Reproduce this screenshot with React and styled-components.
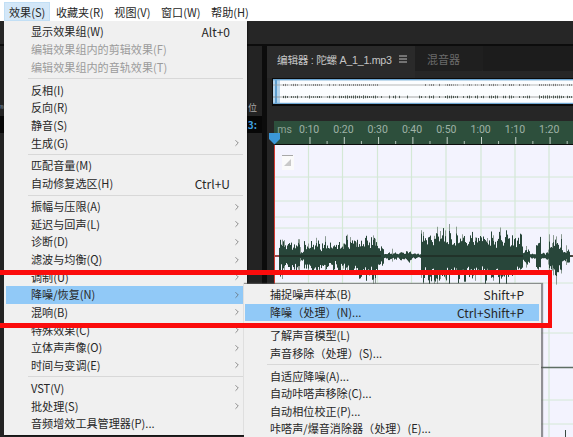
import React from "react";
import styled, { createGlobalStyle } from "styled-components";
import { ChevronRight } from "lucide-react";

const Global = createGlobalStyle`
  html, body { margin: 0; padding: 0; background: #262626; }
  body { font-family: "Noto Sans CJK SC", "Noto Sans", sans-serif; }
  * { box-sizing: border-box; }
`;

const Page = styled.div`
  position: relative;
  width: 573px;
  height: 437px;
  overflow: hidden;
  display: flex;
  flex-direction: column;
  background: #262626;
`;

const MenuBar = styled.nav`
  height: 21px;
  flex: none;
  display: flex;
  padding: 2px 0 0 4px;
  background: #ffffff;
`;

const BarItem = styled.div`
  display: flex;
  align-items: center;
  height: 19px;
  padding: 0 5px;
  margin-right: 0.6px;
  font-size: 11.1px;
  color: #262626;
  background: ${(p) => (p.$open ? "#d3e7f8" : "transparent")};
  box-shadow: ${(p) => (p.$open ? "inset 0 0 0 1px #c2dff5" : "none")};
`;

const Toolbar = styled.div`
  height: 25px;
  flex: none;
  background: #262626;
  border-bottom: 2px solid #0c0c0c;
`;

const Workspace = styled.div`
  flex: 1;
  min-height: 0;
  display: flex;
  background: #0c0c0c;
`;

const SidePanel = styled.aside`
  width: 262px;
  flex: none;
  padding-top: 52px;
  margin-right: 5px;
  background: #232323;
`;

const SideHeader = styled.div`
  height: 18px;
  display: flex;
  justify-content: space-between;
  align-items: center;
  padding-right: 5px;
  font-size: 9px;
  color: #a8a8a8;
`;

const TinyLabel = styled.span`
  font-size: 4px;
  color: #7f97a8;
`;

const SideValue = styled.div`
  height: 17px;
  display: flex;
  justify-content: flex-end;
  align-items: center;
  padding-right: 5px;
  background: #070707;
  color: #3f9fdf;
  font-size: 10px;
  font-weight: 700;
`;

const Editor = styled.section`
  flex: 1;
  min-width: 0;
  display: flex;
  flex-direction: column;
  background: #262626;
`;

const Tabs = styled.div`
  height: 32px;
  flex: none;
  display: flex;
  align-items: flex-start;
`;

const ActiveTab = styled.div`
  width: 148px;
  height: 32px;
  display: flex;
  align-items: center;
  padding: 0 0 6px 10px;
  background: #2a2a2a;
  color: #c6c6c6;
  font-family: "Liberation Sans", "Noto Sans CJK SC", sans-serif;
  font-size: 10.7px;
  letter-spacing: -0.3px;
  white-space: nowrap;
`;

const TabName = styled.span`
  flex: none;
  width: 122px;
`;

const TabMenu = styled.svg`
  flex: none;
  width: 8px;
  height: 8px;
`;

const InactiveTab = styled.div`
  width: 68px;
  height: 25px;
  display: flex;
  align-items: center;
  padding-left: 12px;
  background: #1f1f1f;
  border-bottom-right-radius: 2px;
  color: #6b6b6b;
  font-size: 11px;
`;

const EmptyTabs = styled.div`
  flex: 1;
  height: 25px;
  background: #1c1c1c;
`;

const Overview = styled.div`
  height: 28px;
  flex: none;
  margin-left: 5px;
  padding: 1px 0 2px 1px;
  background: #0a0a0a;
`;

const OverviewSvg = styled.svg`
  display: block;
  width: 100%;
  height: 100%;
`;

const RulerGap = styled.div`
  height: 15px;
  flex: none;
`;

const Ruler = styled.div`
  height: 24px;
  flex: none;
  margin-left: 7px;
  display: flex;
  flex-direction: column;
  background: #2d4f3c;
  border-bottom: 1px solid #0c0c0c;
`;

const RulerLabels = styled.div`
  height: 16px;
  display: flex;
  align-items: flex-end;
`;

const Unit = styled.div`
  width: 18px;
  flex: none;
  text-align: right;
  font-family: Roboto, sans-serif;
  font-size: 10.5px;
  line-height: 14px;
  color: #8fa497;
  white-space: nowrap;
`;

const RulerLabel = styled.div`
  width: 34.3px;
  flex: none;
  text-align: center;
  font-family: Roboto, sans-serif;
  font-size: 10.5px;
  line-height: 14px;
  color: #9fb2a6;
`;

const RulerTicks = styled.div`
  flex: 1;
  margin-left: 34.5px;
  background-repeat: repeat-x;
  background-image: linear-gradient(to right, #c8d4cc 1px, transparent 1px),
    linear-gradient(to right, #b7c6bc 1px, transparent 1px);
  background-size: 34.3px 7px, 34.3px 3px;
  background-position: 0.5px 0, 17.6px 4px;
`;

const PlotArea = styled.div`
  flex: 1;
  min-height: 0;
  margin-left: 7px;
  background: #f3f3fe;
  border-left: 1px solid #d23a32;
`;

const PlotSvg = styled.svg`
  display: block;
  width: 298px;
  height: 292px;
`;

const Playhead = styled.svg`
  position: absolute;
  left: 269px;
  top: 133px;
  width: 12px;
  height: 12px;
`;

const Menu = styled.div`
  position: absolute;
  left: 4px;
  top: 21px;
  width: 243px;
  height: 414px;
  padding: 2px 4px 0 2px;
  background: #f0f0f0;
  box-shadow: 1px 1px 1px rgba(0, 0, 0, 0.35);
`;

const SubMenu = styled.div`
  position: absolute;
  left: 244px;
  top: 284px;
  width: 297px;
  height: 170px;
  padding: 2px 2px 0 1px;
  background: #f0f0f0;
  box-shadow: 1px 0 1px 1px rgba(90, 90, 90, 0.65);
`;

const Row = styled.div`
  height: 17.65px;
  display: grid;
  grid-template-columns: 1fr auto ${(p) => p.$trail}px;
  align-items: center;
  padding-left: 25px;
  font-size: 11.1px;
  line-height: 17px;
  white-space: pre;
  color: ${(p) => (p.$off ? "#9b9b9b" : "#262626")};
  background: ${(p) => (p.$on ? "#91c9f7" : "transparent")};
`;

const Shortcut = styled.span`
  font-size: 12px;
`;

const Arrow = styled(ChevronRight)`
  justify-self: end;
  margin-right: 1px;
  color: #5a5a5a;
`;

const Separator = styled.div`
  height: 5.35px;
  display: flex;
  align-items: center;
  margin-left: 22px;
  &::after {
    content: "";
    flex: 1;
    height: 1px;
    background: #d8d8d8;
  }
`;

const RedFrame = styled.div`
  position: absolute;
  left: -10px;
  top: 270px;
  width: 562px;
  height: 58px;
  border: solid #fb0c0c;
  border-width: 5.5px 4.5px 5.5px 0;
`;

const mainItems = [
  { t: "显示效果组(W)", k: "Alt+0" },
  { t: "编辑效果组内的剪辑效果(F)", off: 1 },
  { t: "编辑效果组内的音轨效果(T)", off: 1 },
  "-",
  { t: "反相(I)" },
  { t: "反向(R)" },
  { t: "静音(S)" },
  { t: "生成(G)", sub: 1 },
  "-",
  { t: "匹配音量(M)" },
  { t: "自动修复选区(H)", k: "Ctrl+U" },
  "-",
  { t: "振幅与压限(A)", sub: 1 },
  { t: "延迟与回声(L)", sub: 1 },
  { t: "诊断(D)", sub: 1 },
  { t: "滤波与均衡(Q)", sub: 1 },
  { t: "调制(U)", sub: 1 },
  { t: "降噪/恢复(N)", sub: 1, on: 1 },
  { t: "混响(B)", sub: 1 },
  { t: "特殊效果(C)", sub: 1 },
  { t: "立体声声像(O)", sub: 1 },
  { t: "时间与变调(E)", sub: 1 },
  "-",
  { t: "VST(V)", sub: 1 },
  { t: "批处理(S)", sub: 1 },
  { t: "音频增效工具管理器(P)..." },
];

const subItems = [
  { t: "捕捉噪声样本(B)", k: "Shift+P" },
  { t: "降噪（处理）(N)...", k: "Ctrl+Shift+P", on: 1 },
  "-",
  { t: "了解声音模型(L)" },
  { t: "声音移除（处理）(S)..." },
  "-",
  { t: "自适应降噪(A)..." },
  { t: "自动咔嗒声移除(C)..." },
  { t: "自动相位校正(P)..." },
  { t: "咔嗒声/爆音消除器（处理）(E)..." },
];

const barItems = [
  ["效果(S)", 1],
  ["收藏夹(R)", 0],
  ["视图(V)", 0],
  ["窗口(W)", 0],
  ["帮助(H)", 0],
];

const rulerLabels = ["0:10", "0:20", "0:30", "0:40", "0:50", "1:00", "1:10", "1:20"];

const gridX = [308.5, 342.5, 377.5, 411.5, 446, 481, 515, 549];
const gridY = [177, 201, 217, 228, 283, 333, 400, 424];

const envelope = [
  [275, 279, 0], [279, 281, 26], [281, 300, 16], [300, 304, 5], [304, 330, 17], [330, 345, 15],
  [345, 365, 21], [365, 378, 24], [378, 384, 10], [384, 405, 4], [405, 412, 6], [412, 421, 3],
  [421, 450, 29], [450, 480, 25], [480, 510, 26], [510, 523, 23], [523, 530, 8], [530, 536, 3],
  [536, 541, 21], [541, 549, 4], [549, 562, 21], [562, 570, 7], [570, 574, 1],
];

function seeded(seed) {
  let s = seed;
  return () => {
    s = (s * 16807) % 2147483647;
    return s / 2147483647;
  };
}

function envAt(x) {
  const e = envelope.find(([a, b]) => x >= a && x < b);
  return e ? e[2] : 0;
}

function wavePaths() {
  const r = seeded(4711);
  let dark = "";
  let light = "";
  for (let x = 275; x < 573; x++) {
    const a = envAt(x);
    if (!a) continue;
    const pulse = 0.62 + 0.38 * Math.abs(Math.sin(x * 0.45));
    const up = a * pulse * (0.45 + 0.55 * r());
    const down = a * pulse * (0.5 + 0.65 * r());
    dark += `M${x + 0.5} ${(256 - up).toFixed(1)}V${(256 + down).toFixed(1)}`;
    if (r() > 0.87) {
      light += `M${x + 0.5} ${(256 - up - 3 - r() * 5).toFixed(1)}V${(256 - up).toFixed(1)}`;
      light += `M${x + 0.5} ${(256 + down).toFixed(1)}V${(256 + down + 3 + r() * 6).toFixed(1)}`;
    }
  }
  return { dark, light };
}

function overviewPath() {
  const r = seeded(991);
  let top = "";
  let bottom = "";
  for (let x = 281; x < 573; x += 2) {
    const quiet = (x > 385 && x < 421) || (x > 530 && x < 538);
    if (quiet && r() < 0.8) continue;
    if (r() < 0.25) continue;
    const a = 0.4 + r() * 0.7;
    if (x < 381 || x > 421) top += `M${x + 0.5} ${(85 - a).toFixed(1)}V${(85 + a).toFixed(1)}`;
    const b = 0.6 + r() * 1;
    bottom += `M${x + 0.5} ${(97 - b).toFixed(1)}V${(97 + b).toFixed(1)}`;
  }
  return { top, bottom };
}

const wave = wavePaths();
const ov = overviewPath();

function MenuList({ items, trail }) {
  return items.map((item, i) =>
    item === "-" ? (
      <Separator key={i} />
    ) : (
      <Row key={i} $off={item.off} $on={item.on} $trail={trail}>
        <span>{item.t}</span>
        {item.k ? <Shortcut>{item.k}</Shortcut> : <span />}
        {item.sub ? <Arrow size={10} strokeWidth={1.6} /> : <span />}
      </Row>
    )
  );
}

export default function App() {
  return (
    <Page>
      <Global />
      <MenuBar>
        {barItems.map(([label, open]) => (
          <BarItem key={label} $open={open}>
            {label}
          </BarItem>
        ))}
      </MenuBar>
      <Toolbar />
      <Workspace>
        <SidePanel>
          <SideHeader>
            <TinyLabel>称</TinyLabel>
            <span>位</span>
          </SideHeader>
          <SideValue>3:</SideValue>
        </SidePanel>
        <Editor>
          <Tabs>
            <ActiveTab>
              <TabName>编辑器 : 陀螺 A_1_1.mp3</TabName>
              <TabMenu viewBox="0 0 8 8">
                <path d="M0 1h8M0 4h8M0 7h8" stroke="#bdbdbd" strokeWidth="1" fill="none" />
              </TabMenu>
            </ActiveTab>
            <InactiveTab>混音器</InactiveTab>
            <EmptyTabs />
          </Tabs>
          <Overview>
            <OverviewSvg viewBox="273 79 300 25" preserveAspectRatio="none">
              <rect x="273" y="79" width="300" height="25" fill="#fbfdff" />
              <rect x="273" y="79" width="7" height="25" fill="#b5d4ec" />
              <rect x="275" y="79" width="2" height="25" fill="#5f9fd0" />
              <path d="M273 85H573" stroke="#9a9a9a" strokeWidth="0.7" />
              <path d="M273 97H573" stroke="#808080" strokeWidth="0.7" />
              <path d={ov.top} stroke="#7a7a7a" strokeWidth="1" />
              <path d={ov.bottom} stroke="#4a5650" strokeWidth="1" />
              <rect x="273" y="79" width="300" height="1.4" fill="#6ea7d3" />
              <rect x="273" y="102.8" width="300" height="1.4" fill="#6ea7d3" />
            </OverviewSvg>
          </Overview>
          <RulerGap />
          <Ruler>
            <RulerLabels>
              <Unit>ms</Unit>
              {rulerLabels.map((l) => (
                <RulerLabel key={l}>{l}</RulerLabel>
              ))}
            </RulerLabels>
            <RulerTicks />
          </Ruler>
          <PlotArea>
            <PlotSvg viewBox="275 145 298 292">
              {gridY.map((y) => (
                <path key={y} d={`M275 ${y}H573`} stroke="#d4e8d6" strokeWidth="1" />
              ))}
              {gridX.map((x) => (
                <path key={x} d={`M${x} 145V437`} stroke="#d4e8d6" strokeWidth="1.2" />
              ))}
              <path d="M275 367.5H573" stroke="#5e6e64" strokeWidth="1.5" />
              <rect x="282" y="155" width="12" height="15" fill="#fafafa" />
              <path d="M282 155.5H293" stroke="#a8a8a8" strokeWidth="1" />
              <path d="M291 159V166H284Z" fill="#c9c9c9" />
              <path d="M275 256H573" stroke="#7c1212" strokeWidth="1.6" />
              <path d={wave.light} stroke="#8b9a92" strokeWidth="1" />
              <path d={wave.dark} stroke="#28463a" strokeWidth="1" />
              <path d="M279 256H381M421 256H523" stroke="#1f2d25" strokeWidth="1.4" />
              <path d="M565.5 430V437" stroke="#3a4a42" strokeWidth="1" />
            </PlotSvg>
          </PlotArea>
        </Editor>
      </Workspace>
      <Playhead viewBox="0 0 12 12">
        <path d="M0 0H11V6L5.5 11.5L0 6Z" fill="#3b97d8" />
      </Playhead>
      <Menu>
        <MenuList items={mainItems} trail={13} />
      </Menu>
      <SubMenu>
        <MenuList items={subItems} trail={15} />
      </SubMenu>
      <RedFrame />
    </Page>
  );
}
